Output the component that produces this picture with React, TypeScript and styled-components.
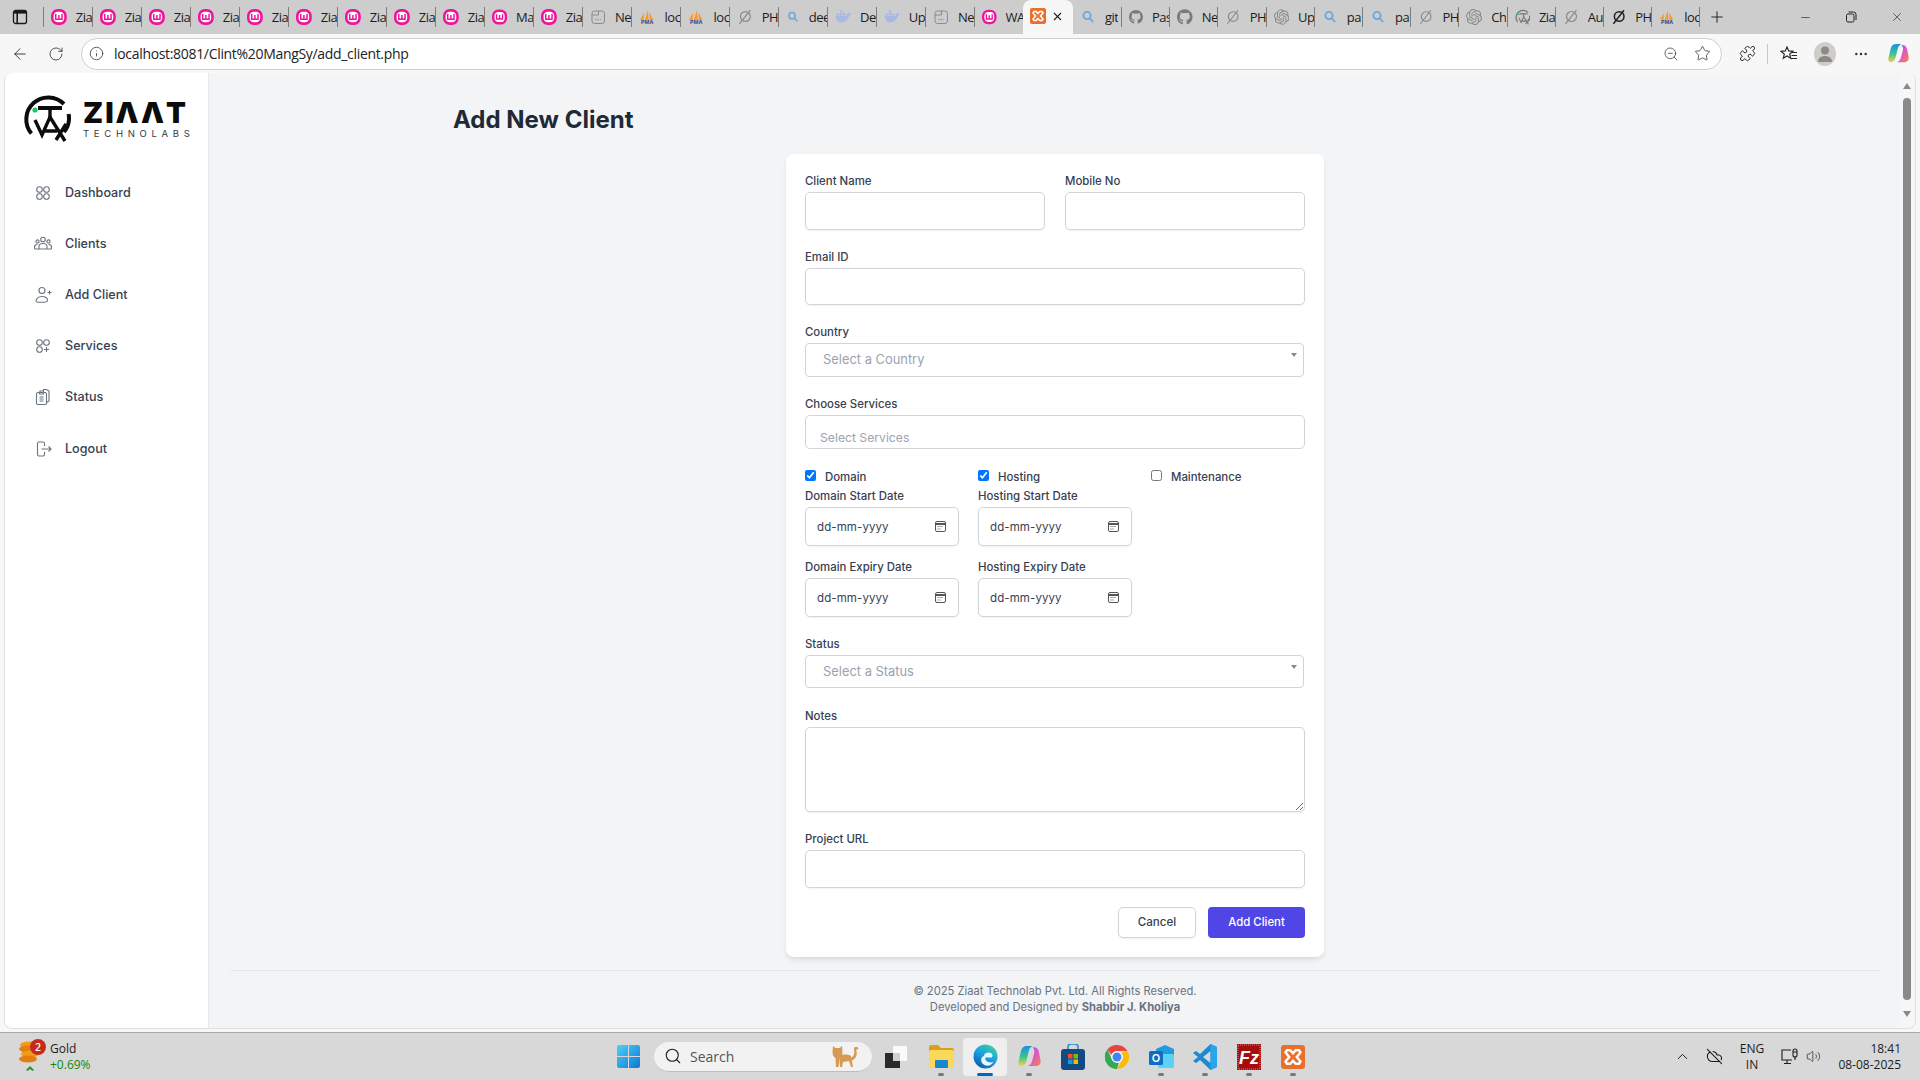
import React from "react";
import styled, { createGlobalStyle } from "styled-components";
import {
  ArrowLeft, RotateCw, Info, ZoomOut, Star, Puzzle, MoreHorizontal, Plus, X, Minus,
  ChevronUp, Search, Volume2, CloudOff,
} from "lucide-react";
import { FaGithub } from "react-icons/fa";
import { SiOpenai } from "react-icons/si";

const Global = createGlobalStyle`
  html, body { margin: 0; padding: 0; height: 100%; overflow: hidden; }
  body { font-family: Inter, "Liberation Sans", sans-serif; }
  * { box-sizing: border-box; }
`;

const Screen = styled.div`
  width: 1920px; height: 1080px; display: flex; flex-direction: column; background: #f7f7f7; overflow: hidden;
`;

/* ---------- tab strip ---------- */
const TabStrip = styled.div`
  height: 34px; flex: none; background: #cdcdcd; display: flex; align-items: center; position: relative;
`;
const WindowButton = styled.div`
  width: 44px; height: 20px; flex: none; display: flex; align-items: center; justify-content: center;
  border-right: 1px solid #7d7d7d; padding-right: 4px;
`;
const Tab = styled.div<{ $w: number; $end?: boolean }>`
  width: ${(p) => p.$w}px; height: 20px; flex: none; display: flex; align-items: center; gap: 9px; padding-left: 7px;
  border-right: ${(p) => (p.$end ? "none" : "1px solid #7d7d7d")}; overflow: hidden;
`;
const TabText = styled.span`
  font: 400 13px "Open Sans", sans-serif; color: #1c1c1c; white-space: nowrap; letter-spacing: -0.5px; overflow: hidden;
`;
const ActiveTab = styled.div`
  width: 50px; height: 34px; flex: none; margin-left: 0; background: #f7f7f7; border-radius: 8px 8px 0 0;
  display: flex; align-items: center; gap: 5px; padding: 0 0 2px 7px; color: #222;
`;
const NewTab = styled.div`
  width: 30px; display: flex; align-items: center; justify-content: flex-start; padding-left: 8px; color: #222; flex: none;
`;
const WindowControls = styled.div`
  margin-left: auto; display: flex; align-items: center; gap: 33px; padding-right: 16px; color: #222;
`;

/* ---------- toolbar ---------- */
const Toolbar = styled.div`
  height: 39px; flex: none; background: #f7f7f7; display: flex; align-items: center; color: #2b2b2b;
`;
const ToolButton = styled.div<{ $w: number; $pl?: number }>`
  width: ${(p) => p.$w}px; height: 32px; flex: none; display: flex; align-items: center; justify-content: center;
  padding-left: ${(p) => p.$pl ?? 0}px;
`;
const AddressBar = styled.div`
  width: 641px; flex: 1 0 auto; height: 32px; background: #fff; border: 1px solid #cfcfcf; border-radius: 16px;
  display: flex; align-items: center; padding: 0 10px 0 7px; max-width: 1641px;
`;
const UrlText = styled.span`
  font: 400 14px "Open Sans", sans-serif; color: #222; letter-spacing: -0.32px; margin-left: 10px; flex: 1;
`;
const BarIcons = styled.div`
  display: flex; align-items: center; gap: 15px; color: #333;
`;
const ToolDivider = styled.div`
  width: 1px; height: 20px; background: #c8c8c8; flex: none;
`;
const Avatar = styled.div`
  width: 22px; height: 24px; border-radius: 50%; background: #cfcdc8; display: flex; align-items: center; justify-content: center;
`;

/* ---------- viewport ---------- */
const Viewport = styled.div`
  flex: none; height: 956px; margin: 0 4px; display: flex; background: #f3f4f6; border: 1px solid #e0e0e0; border-top: none;
  border-radius: 8px; overflow: hidden;
`;
const Sidebar = styled.aside`
  width: 204px; flex: none; background: #fff; border-right: 1px solid #e5e7eb; display: flex; flex-direction: column;
`;
const LogoArea = styled.div`
  height: 94px; flex: none; display: flex; align-items: flex-start; padding: 21px 0 0 18px; gap: 12px;
`;
const LogoWords = styled.div`
  display: flex; flex-direction: column; padding-top: 7px;
`;
const LogoName = styled.span`
  font: 900 29px/24px Inter, sans-serif; color: #0c0c0c; letter-spacing: 2px;
`;
const LogoSub = styled.span`
  font: 400 9.5px/12px Inter, sans-serif; color: #3a3a3a; letter-spacing: 4.7px; margin-top: 3px; white-space: nowrap;
`;
const NavList = styled.nav`
  display: flex; flex-direction: column;
`;
const NavItem = styled.a<{ $mt?: number }>`
  height: 51px; display: flex; align-items: center; gap: 13px; padding-left: 29px; margin-top: ${(p) => p.$mt ?? 0}px;
  font: 500 12.6px Inter, sans-serif; color: #374151; text-decoration: none;
`;
const NavIcon = styled.svg`
  width: 18px; height: 18px; fill: none; stroke: #6b7280; stroke-width: 1.1; flex: none;
`;
const Main = styled.main`
  flex: 1; min-width: 0; padding: 31px 19px 0 21px; display: flex; flex-direction: column;
`;
const Container = styled.div`
  width: 1204px; margin: 0 auto;
`;
const Title = styled.h1`
  margin: 0 0 18px; font: 700 24px/32px Inter, sans-serif; color: #1f2937;
`;
const Card = styled.form`
  width: 538px; margin: 0 auto; background: #fff; border-radius: 8px; padding: 20px 19px 19px;
  box-shadow: 0 4px 6px -1px rgba(0,0,0,.08), 0 2px 4px -2px rgba(0,0,0,.08);
`;
const TwoCols = styled.div`
  display: grid; grid-template-columns: 240px 240px; column-gap: 20px;
`;
const ThreeCols = styled.div<{ $mt: number }>`
  display: grid; grid-template-columns: repeat(3, 154px); column-gap: 19px; margin-top: ${(p) => p.$mt}px; width: 500px;
`;
const Field = styled.div<{ $mt?: number }>`
  margin-top: ${(p) => p.$mt ?? 0}px;
`;
const Label = styled.label`
  display: block; font: 500 11.4px/14px Inter, sans-serif; color: #374151; margin-bottom: 4px; white-space: nowrap;
`;
const TextInput = styled.input<{ $h: number }>`
  display: block; width: 100%; height: ${(p) => p.$h}px; border: 1px solid #d1d5db; border-radius: 5px; background: #fff;
  box-shadow: 0 1px 2px rgba(0,0,0,.05); outline: none; padding: 0 12px;
`;
const NotesArea = styled.textarea`
  display: block; width: 100%; height: 85px; border: 1px solid #d1d5db; border-radius: 5px; background: #fff;
  box-shadow: 0 1px 2px rgba(0,0,0,.05); outline: none; resize: vertical;
`;
const SelectBox = styled.div<{ $h: number }>`
  width: 499px; height: ${(p) => p.$h}px; border: 1px solid #d1d5db; border-radius: 4px; background: #fff;
  display: flex; align-items: flex-start; justify-content: space-between; padding: 0 6px 0 17px;
`;
const SelectText = styled.span`
  font: 400 12.9px/31px Inter, sans-serif; color: #9ca3af;
`;
const SelectArrow = styled.span`
  width: 0; height: 0; margin-top: 9px; border-left: 3px solid transparent; border-right: 3px solid transparent; border-top: 4px solid #888;
`;
const ServicesBox = styled.div`
  height: 34px; border: 1px solid #d1d5db; border-radius: 5px; background: #fff; padding: 13px 14px 0;
`;
const ServicesText = styled.span`
  display: block; font: 400 12.2px/17px Inter, sans-serif; color: #9ca3af;
`;
const CheckLine = styled.label`
  display: flex; align-items: flex-start; height: 14px; gap: 9px; font: 500 11.4px/16px Inter, sans-serif; color: #374151;
`;
const CheckBox = styled.input`
  width: 11px; height: 11px; margin: 1px 0 0 0; accent-color: #0075ff; flex: none;
`;
const DateBox = styled.div`
  height: 39px; border: 1px solid #d1d5db; border-radius: 5px; background: #fff; box-shadow: 0 1px 2px rgba(0,0,0,.05);
  display: flex; align-items: center; justify-content: space-between; padding: 0 12px 0 11px;
`;
const DateText = styled.span`
  font: 400 11.5px Inter, sans-serif; color: #374151; letter-spacing: .1px;
`;
const Actions = styled.div`
  margin-top: 19px; display: flex; justify-content: flex-end; gap: 12px;
`;
const CancelButton = styled.button`
  width: 78px; height: 31px; border: 1px solid #d1d5db; border-radius: 5px; background: #fff;
  font: 500 11.6px Inter, sans-serif; color: #374151; box-shadow: 0 1px 2px rgba(0,0,0,.05); padding: 0 0 1px;
`;
const SubmitButton = styled.button`
  width: 97px; height: 31px; border: none; border-radius: 4px; background: #4f46e5;
  font: 500 11.4px Inter, sans-serif; color: #fff; padding: 0 0 1px;
`;
const Footer = styled.footer`
  margin-top: 13px; border-top: 1px solid #e5e7eb; padding-top: 12px; text-align: center;
  font: 400 11.2px/16px Inter, sans-serif; color: #6b7280;
`;
const FooterLine = styled.div``;
const Scrollbar = styled.div`
  width: 16px; flex: none; background: #f6f6f6; display: flex; flex-direction: column; align-items: center; padding-top: 10px;
`;
const ScrollUp = styled.div`
  width: 0; height: 0; border-left: 4.5px solid transparent; border-right: 4.5px solid transparent; border-bottom: 6px solid #8a8a8a;
`;
const ScrollDown = styled.div`
  width: 0; height: 0; margin-top: 11px; border-left: 4.5px solid transparent; border-right: 4.5px solid transparent; border-top: 6px solid #8a8a8a;
`;
const ScrollThumb = styled.div`
  width: 8px; height: 902px; margin-top: 9px; border-radius: 4px; background: #8a8a8a;
`;

/* ---------- taskbar ---------- */
const Taskbar = styled.div`
  margin-top: 3px; height: 49px; flex: none; background: #d8d8d8; border-top: 1px solid #a8a8a8; display: flex; align-items: center;
  padding-bottom: 1px;
`;
const Widget = styled.div`
  width: 617px; flex: none; display: flex; align-items: center; padding-left: 18px; gap: 10px; position: relative;
`;
const WidgetBadge = styled.span`
  position: absolute; left: 30px; top: -1px; width: 16px; height: 16px; border-radius: 50%; background: #c42b1c; color: #fff;
  font: 600 10.5px/16px "Open Sans", sans-serif; text-align: center;
`;
const WidgetText = styled.div`
  display: flex; flex-direction: column; font: 400 12px/16px "Open Sans", sans-serif; color: #1c1c1c;
`;
const WidgetDelta = styled.span`
  color: #118a11;
`;
const SearchPill = styled.div`
  width: 218px; height: 30px; margin-left: 14px; flex: none; border-radius: 15px; background: #f2f2f2; border-bottom: 1px solid #bdbdbd;
  display: flex; align-items: center; padding: 0 12px 0 10px; gap: 8px; color: #222;
`;
const SearchLabel = styled.span`
  flex: 1; font: 400 14px "Open Sans", sans-serif; color: #555;
`;
const TaskView = styled.div`
  width: 46px; flex: none; display: flex; align-items: center; justify-content: center; padding-left: 2px;
`;
const Apps = styled.div`
  display: flex; align-items: center; margin: 0 0 0 1px;
`;
const AppSlot = styled.div<{ $active?: boolean }>`
  width: 44px; height: 38px; flex: none; display: flex; align-items: center; justify-content: center; position: relative;
  background: ${(p) => (p.$active ? "#efefef" : "transparent")}; border-radius: 4px;
`;
const AppDot = styled.span<{ $active?: boolean }>`
  position: absolute; bottom: 0; left: 50%; transform: translateX(-50%); height: 3px; border-radius: 2px;
  width: ${(p) => (p.$active ? 16 : 6)}px; background: ${(p) => (p.$active ? "#0067c0" : "#7a7a7a")};
`;
const Tray = styled.div`
  margin-left: auto; display: flex; align-items: center; padding-right: 19px; color: #1c1c1c;
`;
const TrayCell = styled.div<{ $w: number }>`
  width: ${(p) => p.$w}px; display: flex; align-items: center; justify-content: center; flex: none;
`;
const TrayStack = styled.div<{ $w: number; $align: string }>`
  width: ${(p) => p.$w}px; display: flex; flex-direction: column; flex: none; text-align: ${(p) => p.$align};
  font: 400 12px/16px "Open Sans", sans-serif; color: #1c1c1c;
`;

/* ---------- drawings ---------- */
const WampFav = () => (
  <svg width="16" height="16" viewBox="0 0 16 16" fill="none">
    <rect x="1.300" y="1.300" width="13.400" height="13.400" rx="5.500" stroke="#f0149c" strokeWidth="2.600" fill="#fff" />
    <path d="M4.800 5v5.200h6.400V5M8 6v4" stroke="#f0149c" strokeWidth="1.500" />
  </svg>
);
const PageFav = () => (
  <svg width="16" height="16" viewBox="0 0 16 16" fill="none" stroke="#8a8a8a">
    <rect x="2" y="2" width="12.500" height="12.500" rx="2.500" />
    <path d="M2 6h6.500V2" />
    <path d="M5.500 10.500h5" strokeDasharray="1 1.200" strokeWidth="1.400" />
  </svg>
);
const PmaFav = () => (
  <svg width="17" height="16" viewBox="0 0 17 16">
    <path d="M1 11 5 4v7zM6 11l3-10 1 10zM11 11l-.5-8L15 11z" fill="#f59a2b" />
    <text x="8.500" y="15.500" textAnchor="middle" fontSize="5.500" fontWeight="700" fontFamily="Inter" fill="#3d4a8a">PMA</text>
  </svg>
);
const NullFav = ({ dark }: { dark?: boolean }) => (
  <svg width="16" height="16" viewBox="0 0 16 16" fill="none" stroke={dark ? "#222" : "#8a8a8a"} strokeWidth={dark ? 1.600 : 1.200}>
    <circle cx="8.500" cy="7.500" r="5" />
    <path d="M13.500 1 2.500 15" />
  </svg>
);
const SearchFav = () => (
  <svg width="16" height="16" viewBox="0 0 16 16" fill="none" stroke="#6fa6d8" strokeWidth="1.800">
    <circle cx="7" cy="6.500" r="3.600" />
    <path d="m9.800 9.400 3.400 3.600" />
  </svg>
);
const DockerFav = () => (
  <svg width="16" height="16" viewBox="0 0 16 16" fill="#aab8e6">
    <path d="M.5 6.500h11c.5-1.500 1.500-2.500 3-3l1 1c0 1-.6 2.200-1.500 2.800C13 11 10 13.500 6 13.500 3 13.500 1 11 .5 6.500z" />
    <path d="M2 4h2.500v2H2zM5 4h2.500v2H5zM8 4h2v2H8zM5 1.500h2.500v2H5z" />
  </svg>
);
const XamppFav = ({ size = 16 }: { size?: number }) => (
  <svg width={size} height={size} viewBox="0 0 16 16" fill="none">
    <rect width="16" height="16" rx="2" fill="#e8702a" />
    <path d="M4 3.500h2.200L8 5.500l1.800-2H12l1 1.500L10.500 8l2.500 3-1 1.500H9.800L8 10.500l-1.800 2H4L3 11l2.500-3L3 5z" fill="none" stroke="#fff" strokeWidth="1.600" />
  </svg>
);
const LogoMark = ({ size, color }: { size: number; color: string }) => (
  <svg width={size} height={size} viewBox="1 1 48 48" fill="none" stroke={color} strokeWidth="4">
    <path d="M9.400 40.500A22 22 0 0 1 42 11" />
    <path d="M46.600 21A22 22 0 0 1 42 39" />
    <path d="M16 15h24" />
    <path d="M28 15v9" strokeWidth="3.400" />
    <path d="M13 27l7 15 8-18 15 24M23 38h12M44 31 34 47" strokeWidth="3.400" />
    <circle cx="13" cy="17" r="2.600" fill="#22c55e" stroke="none" />
  </svg>
);

type Kind = "wamp" | "page" | "pma" | "null" | "nulldark" | "search" | "docker" | "github" | "openai" | "ziaat";
const fav = (k: Kind) => {
  switch (k) {
    case "wamp": return <WampFav />;
    case "page": return <PageFav />;
    case "pma": return <PmaFav />;
    case "null": return <NullFav />;
    case "nulldark": return <NullFav dark />;
    case "search": return <SearchFav />;
    case "docker": return <DockerFav />;
    case "github": return <FaGithub size={16} color="#7b7b7b" />;
    case "openai": return <SiOpenai size={16} color="#8a8a8a" />;
    case "ziaat": return <LogoMark size={16} color="#777" />;
  }
};
const tabsBefore: [Kind, string][] = [
  ["wamp", "Zia"], ["wamp", "Zia"], ["wamp", "Zia"], ["wamp", "Zia"], ["wamp", "Zia"], ["wamp", "Zia"], ["wamp", "Zia"],
  ["wamp", "Zia"], ["wamp", "Zia"], ["wamp", "Ma"], ["wamp", "Zia"], ["page", "Ne"], ["pma", "loc"], ["pma", "loc"],
  ["null", "PH"], ["search", "dee"], ["docker", "De"], ["docker", "Up"], ["page", "Ne"], ["wamp", "WA"],
];
const tabsAfter: [Kind, string][] = [
  ["search", "git"], ["github", "Pas"], ["github", "Ne"], ["null", "PH"], ["openai", "Up"], ["search", "pa"], ["search", "pa"],
  ["null", "PH"], ["openai", "Ch"], ["ziaat", "Zia"], ["null", "Au"], ["nulldark", "PH"], ["pma", "loc"],
];

const WindowGlyph = () => (
  <svg width="16" height="16" viewBox="0 0 16 16" fill="none" stroke="#1a1a1a" strokeWidth="1.300">
    <rect x="1.500" y="1.500" width="13" height="13" rx="2" />
    <path d="M2 3.300h12" strokeWidth="2.600" />
    <path d="M5.200 4v10" strokeWidth="1.600" />
  </svg>
);
const RestoreGlyph = () => (
  <svg width="12" height="12" viewBox="0 0 12 12" fill="none" stroke="#222">
    <rect x="1.500" y="3" width="7.500" height="8" rx="1.500" />
    <path d="M3.500 1h5A2.500 2.500 0 0 1 11 3.500V9" />
  </svg>
);
const FavoritesGlyph = () => (
  <svg width="18" height="18" viewBox="0 0 18 18" fill="none" stroke="#2b2b2b" strokeWidth="1.200">
    <path d="m7 2 1.700 3.900 4.200.4-3.200 2.800 1 4.100L7 11l-3.700 2.200 1-4.100L1.100 6.300l4.200-.4z" />
    <path d="M12 7.500h5M11.500 10.500H17M11 13.500h6" />
  </svg>
);
const PersonGlyph = () => (
  <svg width="14" height="18" viewBox="0 0 14 18" fill="#8b8a86">
    <circle cx="7" cy="5.500" r="4" />
    <path d="M0 17c0-4 3-6 7-6s7 2 7 6z" />
  </svg>
);
const CopilotGlyph = ({ size }: { size: number }) => (
  <svg width={size} height={size} viewBox="0 0 24 24">
    <defs>
      <linearGradient id={`cpa${size}`} x1="0" y1="0" x2="0" y2="1">
        <stop offset="0" stopColor="#1b8fe8" />
        <stop offset=".55" stopColor="#3cc48f" />
        <stop offset="1" stopColor="#f5d33a" />
      </linearGradient>
      <linearGradient id={`cpb${size}`} x1="0" y1="0" x2="1" y2="1">
        <stop offset="0" stopColor="#6e6cf0" />
        <stop offset=".5" stopColor="#e255c6" />
        <stop offset="1" stopColor="#f58a3c" />
      </linearGradient>
    </defs>
    <path d="M9 2h6c-2.500 1-3.300 3-4 6l-2 8c-.7 3-2.500 5-5 5-2 0-3-1.500-2.500-4l2-9C4.200 4.500 6 2 9 2z" fill={`url(#cpa${size})`} />
    <path d="M15 3h1c3 0 4.500 2 5 4.500l1.600 8c.5 3-1 5.500-4 5.500h-8c2.500-1 3.500-3 4-5l2-7.500c.4-2-.2-4-1.600-5.500z" fill={`url(#cpb${size})`} />
  </svg>
);
const GoldCoins = () => (
  <svg width="22" height="34" viewBox="0 0 22 34">
    <ellipse cx="11" cy="5" rx="9" ry="3.500" fill="#f29a1c" />
    <ellipse cx="10" cy="9" rx="9" ry="3.500" fill="#e07f10" />
    <ellipse cx="12" cy="14" rx="9" ry="3.500" fill="#f29a1c" />
    <ellipse cx="10" cy="19" rx="9" ry="3.500" fill="#e07f10" />
    <path d="m8 30 4-4 4 4-1.500 1L12 29l-2.500 2z" fill="#2f8f2f" />
  </svg>
);
const StartGlyph = () => (
  <svg width="23" height="23" viewBox="0 0 23 23">
    <defs>
      <linearGradient id="st" x1="0" y1="0" x2="1" y2="1">
        <stop offset="0" stopColor="#4fd0fa" />
        <stop offset="1" stopColor="#0a78d4" />
      </linearGradient>
    </defs>
    <path d="M0 2a2 2 0 0 1 2-2h9v11H0zM12 0h9a2 2 0 0 1 2 2v9H12zM0 12h11v11H2a2 2 0 0 1-2-2zM12 12h11v9a2 2 0 0 1-2 2h-9z" fill="url(#st)" />
  </svg>
);
const CatGlyph = () => (
  <svg width="30" height="26" viewBox="0 0 30 26" fill="#d79a52">
    <path d="M3 3l2.500 2h4L12 3l.5 7c0 2-1 3-3 4l-1 10H6l-.5-9C3.500 14 2.500 12 2.500 9z" />
    <path d="M9 13c4-2 9-2 12 0l2 11h-2l-2-6-6 1-1 5h-2zM21 15c3-2 4-5 3-8-.5-2 1-4 3-3 2 1 1.500 3 .5 2.500-1-.5-1.500.5-1 2 1 4-1 7-4 9z" />
  </svg>
);
const TaskViewGlyph = () => (
  <svg width="24" height="24" viewBox="0 0 24 24">
    <rect x="9" y="1" width="14" height="15" fill="#fafafa" />
    <rect x="1" y="8" width="15" height="15" fill="#2a2a2a" />
    <rect x="9" y="8" width="7" height="8" fill="#d0d0d0" />
  </svg>
);
const FolderGlyph = () => (
  <svg width="25" height="23" viewBox="0 0 25 23">
    <path d="M0 2a2 2 0 0 1 2-2h7l3 3h11a2 2 0 0 1 2 2v2H0z" fill="#d9a01c" />
    <rect y="5" width="25" height="18" rx="2" fill="#fbd85a" />
    <rect x="6" y="15" width="13" height="8" rx="1" fill="#1a86d0" />
  </svg>
);
const EdgeGlyph = () => (
  <svg width="25" height="25" viewBox="0 0 25 25">
    <defs>
      <linearGradient id="ed" x1=".8" y1="0" x2=".2" y2="1">
        <stop offset="0" stopColor="#37d6a0" />
        <stop offset=".5" stopColor="#1b9de2" />
        <stop offset="1" stopColor="#0c59a4" />
      </linearGradient>
    </defs>
    <circle cx="12.500" cy="12.500" r="12" fill="url(#ed)" />
    <path d="M11 12c0-3 4-4.500 7-3 2 1 2 3.500.5 4.500h-6c-1 3 2.500 6 8 4.500-2 3.500-6 4.500-9 3-3-1.500-4-4-3-7 .5-1 1.500-2 2.500-2z" fill="#e9f4fb" />
  </svg>
);
const StoreGlyph = () => (
  <svg width="24" height="26" viewBox="0 0 24 26">
    <path d="M7 6V3a3 3 0 0 1 3-3h4a3 3 0 0 1 3 3v3" fill="none" stroke="#1f8fd8" strokeWidth="1.600" />
    <rect y="5" width="24" height="21" rx="3" fill="#134a82" />
    <rect x="7" y="10" width="4.500" height="4.500" fill="#f25022" />
    <rect x="12.500" y="10" width="4.500" height="4.500" fill="#7fba00" />
    <rect x="7" y="15.500" width="4.500" height="4.500" fill="#00a4ef" />
    <rect x="12.500" y="15.500" width="4.500" height="4.500" fill="#ffb900" />
  </svg>
);
const ChromeGlyph = () => (
  <svg width="24" height="24" viewBox="0 0 24 24">
    <path d="M12 0a12 12 0 0 1 10.400 6H12a6 6 0 0 0-5.600 3.800L2.400 4.500A12 12 0 0 1 12 0z" fill="#e8453c" />
    <path d="M22.400 6A12 12 0 0 1 12 24l5.200-9A6 6 0 0 0 16 8z" fill="#fbbc04" />
    <path d="M12 24A12 12 0 0 1 2.400 4.500L7.200 15a6 6 0 0 0 6.500 2.800z" fill="#34a853" />
    <circle cx="12" cy="12" r="5.800" fill="#fff" />
    <circle cx="12" cy="12" r="4.500" fill="#4285f4" />
  </svg>
);
const OutlookGlyph = () => (
  <svg width="25" height="24" viewBox="0 0 25 24">
    <path d="M7 4 16 0l9 4v16H7z" fill="#1f9be0" />
    <rect x="9" y="9" width="16" height="14" rx="1.500" fill="#5fd0f5" />
    <rect y="6" width="14" height="14" rx="1.500" fill="#0f6cc4" />
    <text x="7" y="17" textAnchor="middle" fontSize="11" fontWeight="600" fontFamily="Inter" fill="#fff">O</text>
  </svg>
);
const VsCodeGlyph = () => (
  <svg width="24" height="26" viewBox="0 0 24 26">
    <path d="M17.500 0 24 3v20l-6.500 3L7 16l-4 3-3-2 5-4-5-4 3-2 4 3z" fill="#1b8ad3" />
    <path d="M17.500 7v12L10 13z" fill="#d8d8d8" />
    <path d="M17.500 0 24 3v20l-6.500 3z" fill="#2aa5ec" />
  </svg>
);
const FileZillaGlyph = () => (
  <svg width="24" height="26" viewBox="0 0 24 26">
    <rect width="24" height="26" fill="#a70c0c" />
    <rect x="1" y="1" width="22" height="24" fill="none" stroke="#d9d9d9" strokeDasharray="1 1" strokeWidth=".6" />
    <text x="12" y="20" textAnchor="middle" fontSize="18" fontWeight="700" fontStyle="italic" fontFamily="Liberation Sans" fill="#fff">Fz</text>
  </svg>
);
const NetworkGlyph = () => (
  <svg width="18" height="17" viewBox="0 0 18 17" fill="none" stroke="#1c1c1c" strokeWidth="1.100">
    <path d="M11 12H1V2h9" />
    <path d="M6 12v3M3 15.500h7" />
    <rect x="12" y="1" width="4" height="8" rx="2" />
    <path d="M12 4h4M14 9v3" />
  </svg>
);
const CalendarGlyph = () => (
  <svg width="11" height="11" viewBox="0 0 11 11" fill="none" stroke="#555">
    <rect x=".5" y=".5" width="10" height="10" rx="1.500" />
    <path d="M.5 3h10" strokeWidth="2" />
    <path d="M2.500 5.500h6M2.500 8h4" strokeDasharray="1 1" />
  </svg>
);

const navIcons: Record<string, React.ReactNode> = {
  Dashboard: (
    <>
      <circle cx="5.500" cy="5.500" r="2.800" /><circle cx="12.500" cy="5.500" r="2.800" />
      <circle cx="5.500" cy="12.500" r="2.800" /><circle cx="12.500" cy="12.500" r="2.800" />
    </>
  ),
  Clients: (
    <>
      <circle cx="9" cy="4.500" r="2.300" /><circle cx="3.500" cy="6.500" r="1.600" /><circle cx="14.500" cy="6.500" r="1.600" />
      <path d="M5 14v-2.500C5 9.500 7 8.500 9 8.500s4 1 4 3V14M.5 14v-2c0-1.500 1.200-2.500 3-2.500M17.500 14v-2c0-1.500-1.200-2.500-3-2.500M.5 14h17" />
    </>
  ),
  "Add Client": (
    <>
      <circle cx="8" cy="4.500" r="3" />
      <path d="M2 15.500c0-3 2.500-5 6-5s6 2 5.500 4c-.2 1.500-2.500 1.800-5.500 1.800s-6-.3-6-.8zM13.500 6.500h4M15.500 4.500v4" />
    </>
  ),
  Services: (
    <>
      <circle cx="5.500" cy="5.500" r="2.800" /><circle cx="12.500" cy="5.500" r="2.800" />
      <circle cx="5.500" cy="12.500" r="2.800" />
      <path d="M12.500 10v5M10 12.500h5" />
    </>
  ),
  Status: (
    <>
      <rect x="2.500" y="4.500" width="10" height="12" rx="1.500" />
      <path d="M6 3h3.500v3H5.500zM9.500 3V1.500h3l2.500 1.500v10l-2.500 1.500M5.500 9h4M5.500 11h4M5.500 13h4" />
    </>
  ),
  Logout: (
    <>
      <path d="M10.500 6V3.500C10.500 2.500 10 2 9 2H5C4 2 3.500 2.500 3.500 3.500v11c0 1 .5 1.500 1.500 1.500h4c1 0 1.500-.5 1.500-1.500V12" />
      <path d="M7.500 9H17M14.500 6.500 17 9l-2.500 2.500" />
    </>
  ),
};
const navNames = ["Dashboard", "Clients", "Add Client", "Services", "Status", "Logout"];

const apps: { node: React.ReactNode; dot?: boolean; active?: boolean }[] = [
  { node: <FolderGlyph />, dot: true },
  { node: <EdgeGlyph />, active: true },
  { node: <CopilotGlyph size={25} />, dot: true },
  { node: <StoreGlyph /> },
  { node: <ChromeGlyph /> },
  { node: <OutlookGlyph />, dot: true },
  { node: <VsCodeGlyph />, dot: true },
  { node: <FileZillaGlyph />, dot: true },
  { node: <XamppFav size={24} />, dot: true },
];

const DateField = ({ label }: { label: string }) => (
  <div>
    <Label>{label}</Label>
    <DateBox>
      <DateText>dd-mm-yyyy</DateText>
      <CalendarGlyph />
    </DateBox>
  </div>
);
const Check = ({ label, checked }: { label: string; checked?: boolean }) => (
  <CheckLine>
    <CheckBox type="checkbox" defaultChecked={checked} />
    {label}
  </CheckLine>
);

export default function App() {
  return (
    <Screen>
      <Global />
      <TabStrip>
        <WindowButton><WindowGlyph /></WindowButton>
        {tabsBefore.map(([k, t], i) => (
          <Tab key={i} $w={i === 19 ? 48 : 49} $end={i === 19}>{fav(k)}<TabText>{t}</TabText></Tab>
        ))}
        <ActiveTab><XamppFav /><X size={13} /></ActiveTab>
        {tabsAfter.map(([k, t], i) => (
          <Tab key={i} $w={i === 0 ? 49 : 48.2}>{fav(k)}<TabText>{t}</TabText></Tab>
        ))}
        <NewTab><Plus size={18} strokeWidth={1.3} /></NewTab>
        <WindowControls>
          <Minus size={13} strokeWidth={1.2} />
          <RestoreGlyph />
          <X size={14} strokeWidth={1.1} />
        </WindowControls>
      </TabStrip>

      <Toolbar>
        <ToolButton $w={40}><ArrowLeft size={18} strokeWidth={1.2} /></ToolButton>
        <ToolButton $w={32}><RotateCw size={16} strokeWidth={1.2} /></ToolButton>
        <ToolButton $w={9} />
        <AddressBar>
          <Info size={15} strokeWidth={1.2} />
          <UrlText>localhost:8081/Clint%20MangSy/add_client.php</UrlText>
          <BarIcons>
            <ZoomOut size={16} strokeWidth={1.1} />
            <Star size={17} strokeWidth={1.1} />
          </BarIcons>
        </AddressBar>
        <ToolButton $w={45} $pl={5}><Puzzle size={17} strokeWidth={1.4} /></ToolButton>
        <ToolDivider />
        <ToolButton $w={42}><FavoritesGlyph /></ToolButton>
        <ToolButton $w={30}><Avatar><PersonGlyph /></Avatar></ToolButton>
        <ToolButton $w={42}><MoreHorizontal size={16} strokeWidth={1.6} /></ToolButton>
        <ToolButton $w={33}><CopilotGlyph size={23} /></ToolButton>
      </Toolbar>

      <Viewport>
        <Sidebar>
          <LogoArea>
            <LogoMark size={48} color="#0c0c0c" />
            <LogoWords>
              <LogoName>ZIΛΛT</LogoName>
              <LogoSub>TECHNOLABS</LogoSub>
            </LogoWords>
          </LogoArea>
          <NavList>
            {navNames.map((n, i) => (
              <NavItem key={n} $mt={i === 5 ? 1 : 0}>
                <NavIcon viewBox="0 0 18 18">{navIcons[n]}</NavIcon>
                {n}
              </NavItem>
            ))}
          </NavList>
        </Sidebar>
        <Main>
          <Container>
            <Title>Add New Client</Title>
            <Card>
              <TwoCols>
                <Field><Label>Client Name</Label><TextInput $h={38} /></Field>
                <Field><Label>Mobile No</Label><TextInput $h={38} /></Field>
              </TwoCols>
              <Field $mt={20}><Label>Email ID</Label><TextInput $h={37} /></Field>
              <Field $mt={20}>
                <Label>Country</Label>
                <SelectBox $h={34}><SelectText>Select a Country</SelectText><SelectArrow /></SelectBox>
              </Field>
              <Field $mt={20}>
                <Label>Choose Services</Label>
                <ServicesBox><ServicesText>Select Services</ServicesText></ServicesBox>
              </Field>
              <ThreeCols $mt={20}>
                <Check label="Domain" checked />
                <Check label="Hosting" checked />
                <Check label="Maintenance" />
              </ThreeCols>
              <ThreeCols $mt={6}>
                <DateField label="Domain Start Date" />
                <DateField label="Hosting Start Date" />
              </ThreeCols>
              <ThreeCols $mt={14}>
                <DateField label="Domain Expiry Date" />
                <DateField label="Hosting Expiry Date" />
              </ThreeCols>
              <Field $mt={20}>
                <Label>Status</Label>
                <SelectBox $h={33}><SelectText>Select a Status</SelectText><SelectArrow /></SelectBox>
              </Field>
              <Field $mt={21}><Label>Notes</Label><NotesArea /></Field>
              <Field $mt={20}><Label>Project URL</Label><TextInput $h={38} /></Field>
              <Actions>
                <CancelButton type="button">Cancel</CancelButton>
                <SubmitButton type="button">Add Client</SubmitButton>
              </Actions>
            </Card>
          </Container>
          <Footer>
            <FooterLine>© 2025 Ziaat Technolab Pvt. Ltd. All Rights Reserved.</FooterLine>
            <FooterLine>Developed and Designed by <b>Shabbir J. Kholiya</b></FooterLine>
          </Footer>
        </Main>
        <Scrollbar>
          <ScrollUp />
          <ScrollThumb />
          <ScrollDown />
        </Scrollbar>
      </Viewport>

      <Taskbar>
        <Widget>
          <GoldCoins />
          <WidgetBadge>2</WidgetBadge>
          <WidgetText>Gold<WidgetDelta>+0.69%</WidgetDelta></WidgetText>
        </Widget>
        <StartGlyph />
        <SearchPill>
          <Search size={18} strokeWidth={1.5} />
          <SearchLabel>Search</SearchLabel>
          <CatGlyph />
        </SearchPill>
        <TaskView><TaskViewGlyph /></TaskView>
        <Apps>
          {apps.map((a, i) => (
            <AppSlot key={i} $active={a.active}>
              {a.node}
              {(a.dot || a.active) && <AppDot $active={a.active} />}
            </AppSlot>
          ))}
        </Apps>
        <Tray>
          <TrayCell $w={40}><ChevronUp size={17} strokeWidth={1.4} /></TrayCell>
          <TrayCell $w={24}><CloudOff size={17} strokeWidth={1.5} /></TrayCell>
          <TrayStack $w={52} $align="center"><span>ENG</span><span>IN</span></TrayStack>
          <TrayCell $w={24}><NetworkGlyph /></TrayCell>
          <TrayCell $w={22}><Volume2 size={15} strokeWidth={1.1} /></TrayCell>
          <TrayStack $w={77} $align="right"><span>18:41</span><span>08-08-2025</span></TrayStack>
        </Tray>
      </Taskbar>
    </Screen>
  );
}
